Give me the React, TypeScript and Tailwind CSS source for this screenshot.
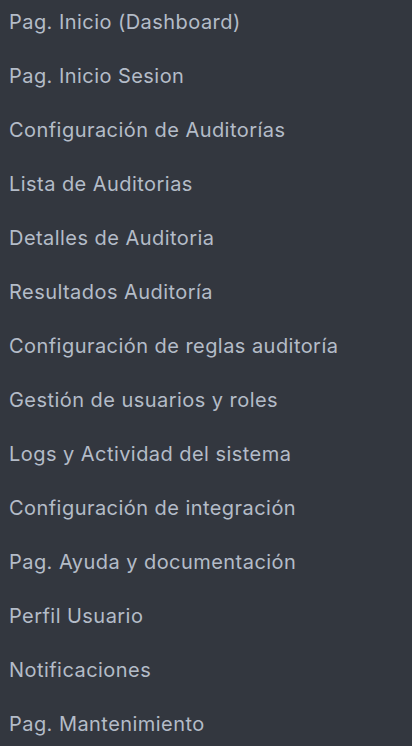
const items = [
  'Pag. Inicio (Dashboard)',
  'Pag. Inicio Sesion',
  'Configuración de Auditorías',
  'Lista de Auditorias',
  'Detalles de Auditoria',
  'Resultados Auditoría',
  'Configuración de reglas auditoría',
  'Gestión de usuarios y roles',
  'Logs y Actividad del sistema',
  'Configuración de integración',
  'Pag. Ayuda y documentación',
  'Perfil Usuario',
  'Notificaciones',
  'Pag. Mantenimiento',
]

export default function App() {
  return (
    <div className="h-[746px] w-[412px] overflow-hidden bg-[#33373f] font-['Inter',sans-serif]">
      <ul className="-mt-[5px] flex flex-col">
        {items.map((item) => (
          <li key={item} className="flex h-[54px] items-center px-[9px] text-[20px] tracking-[0.45px] text-[#b4bcc8]">
            {item}
          </li>
        ))}
      </ul>
    </div>
  )
}
